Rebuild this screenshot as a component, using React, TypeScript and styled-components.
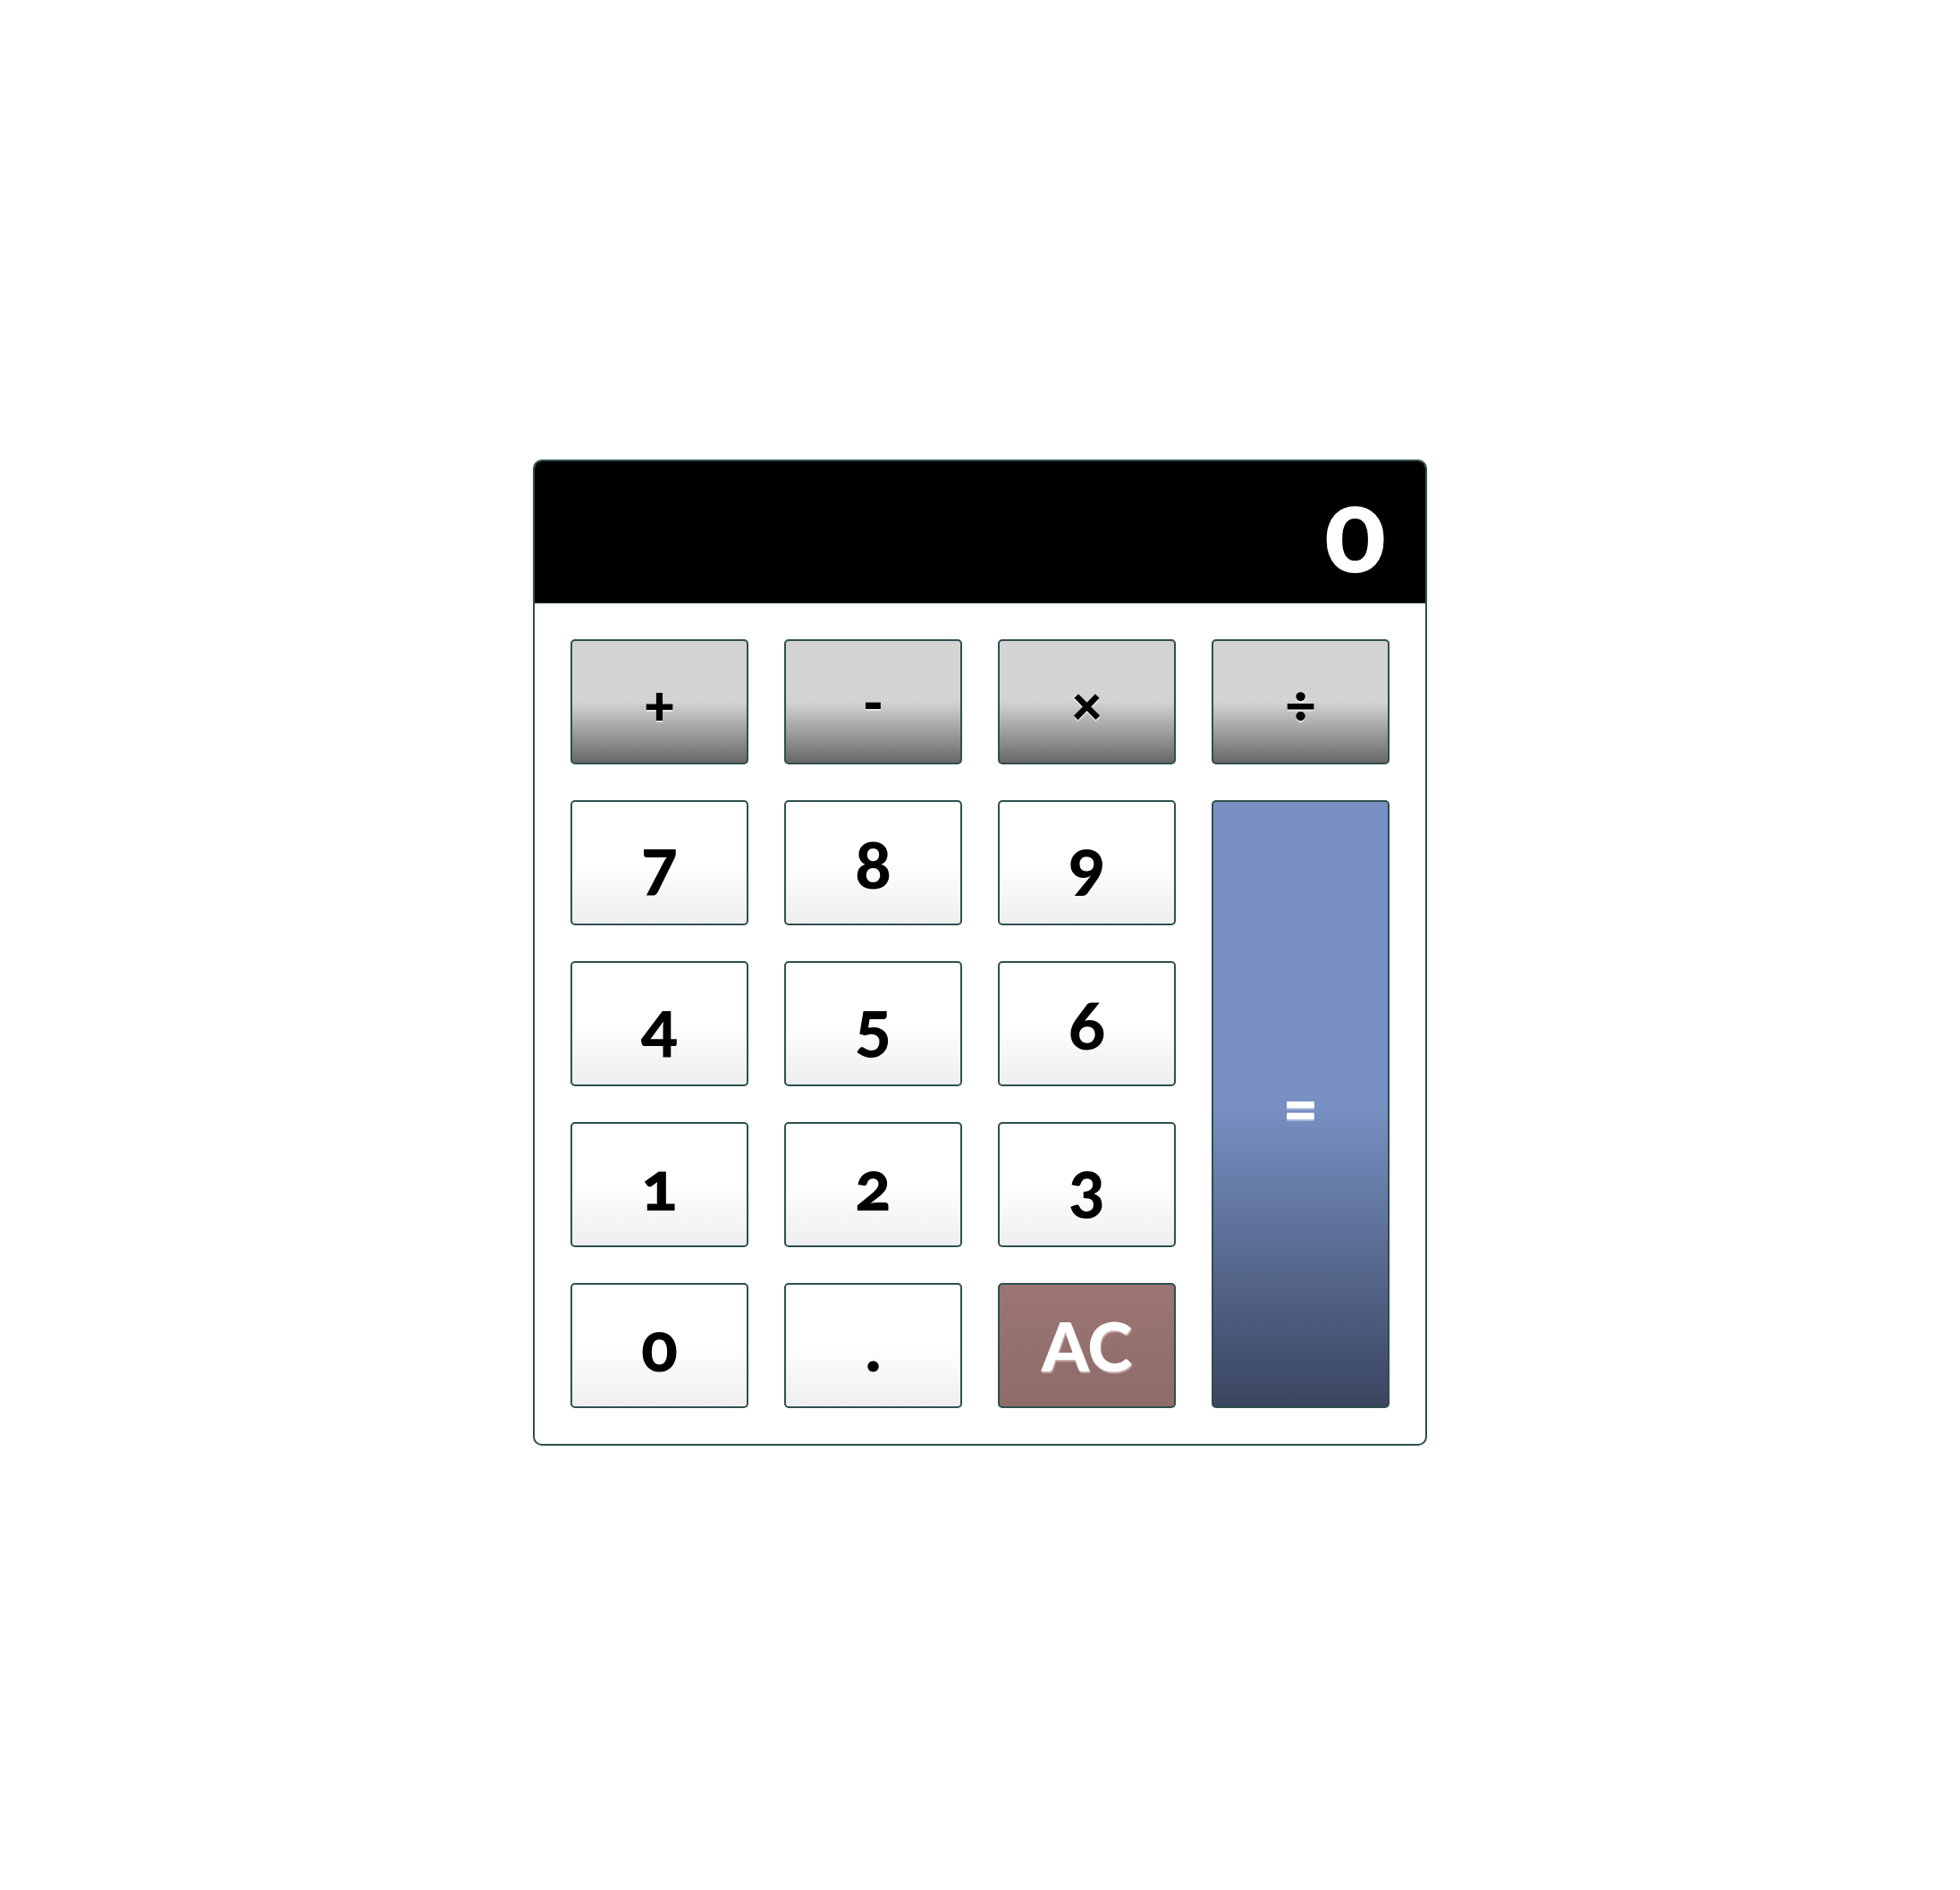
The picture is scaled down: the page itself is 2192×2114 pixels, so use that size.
import React, { useState } from 'react';
import styled, { createGlobalStyle, css } from 'styled-components';

const GlobalStyle = createGlobalStyle`
  * {
    box-sizing: border-box;
  }

  body {
    margin: 0;
    background: #ffffff;
    font-family: Lato, "Noto Sans", "DejaVu Sans", sans-serif;
  }
`;

type Kind = 'op' | 'num' | 'clear' | 'equals';

const keys: { label: string; kind: Kind }[] = [
  { label: '+', kind: 'op' },
  { label: '-', kind: 'op' },
  { label: '×', kind: 'op' },
  { label: '÷', kind: 'op' },
  { label: '7', kind: 'num' },
  { label: '8', kind: 'num' },
  { label: '9', kind: 'num' },
  { label: '=', kind: 'equals' },
  { label: '4', kind: 'num' },
  { label: '5', kind: 'num' },
  { label: '6', kind: 'num' },
  { label: '1', kind: 'num' },
  { label: '2', kind: 'num' },
  { label: '3', kind: 'num' },
  { label: '0', kind: 'num' },
  { label: '.', kind: 'num' },
  { label: 'AC', kind: 'clear' },
];

const App: React.FC = () => {
  const [value, setValue] = useState<string>('0');

  const press = (label: string) => {
    if (label === 'AC') {
      setValue('0');
      return;
    }
    if (label === '=') return;
    setValue((v) => (v === '0' ? label : v + label));
  };

  return (
    <>
      <GlobalStyle />
      <Page>
        <Calculator>
          <Display>{value}</Display>
          <Keypad>
            {keys.map((k) => (
              <Key key={k.label} $kind={k.kind} onClick={() => press(k.label)}>
                {k.label}
              </Key>
            ))}
          </Keypad>
        </Calculator>
      </Page>
    </>
  );
};

export default App;

const Page = styled.div`
  height: 100vh;
  padding-top: 16px;
  display: flex;
  align-items: center;
  justify-content: center;
`;

const Calculator = styled.div`
  width: 1000px;
  border: 2px solid #2f4f4f;
  border-radius: 10px;
  overflow: hidden;
  background: #ffffff;
`;

const Display = styled.div`
  height: 159px;
  background: #000000;
  border-bottom: 1px solid #3a4f4f;
  color: #ffffff;
  font-size: 128px;
  font-weight: 900;
  font-variant-numeric: oldstyle-nums;
  line-height: 150px;
  text-align: right;
  padding-right: 44px;
`;

const Keypad = styled.div`
  display: grid;
  grid-template-columns: repeat(4, 1fr);
  grid-auto-rows: 140px;
  gap: 40px;
  padding: 40px;
`;

const kindStyles = {
  op: css`
    background: linear-gradient(#d3d3d3 50%, #686868);
    color: #000000;
    font-size: 64px;
    text-shadow: 0 2px 1px rgba(255, 255, 255, 0.6);
  `,
  num: css`
    background: linear-gradient(#ffffff 50%, #eeeeee);
    color: #000000;
  `,
  clear: css`
    background: linear-gradient(#9b7573, #8d6c6a);
    color: #ffffff;
    text-shadow: 1px 2px 1px rgba(255, 230, 230, 0.5);
  `,
  equals: css`
    grid-column: 4;
    grid-row: 2 / span 4;
    background: linear-gradient(#7890c3 50%, #3a4560);
    color: #ffffff;
    font-size: 72px;
    text-shadow: 0 2px 1px rgba(255, 255, 255, 0.4);
  `,
};

const Key = styled.button<{ $kind: Kind }>`
  border: 2px solid #2f4f4f;
  border-radius: 5px;
  font-family: inherit;
  font-size: 76px;
  font-weight: 900;
  font-variant-numeric: oldstyle-nums;
  display: flex;
  align-items: center;
  justify-content: center;
  padding: 0;
  cursor: pointer;
  ${(p) => kindStyles[p.$kind]}
`;
